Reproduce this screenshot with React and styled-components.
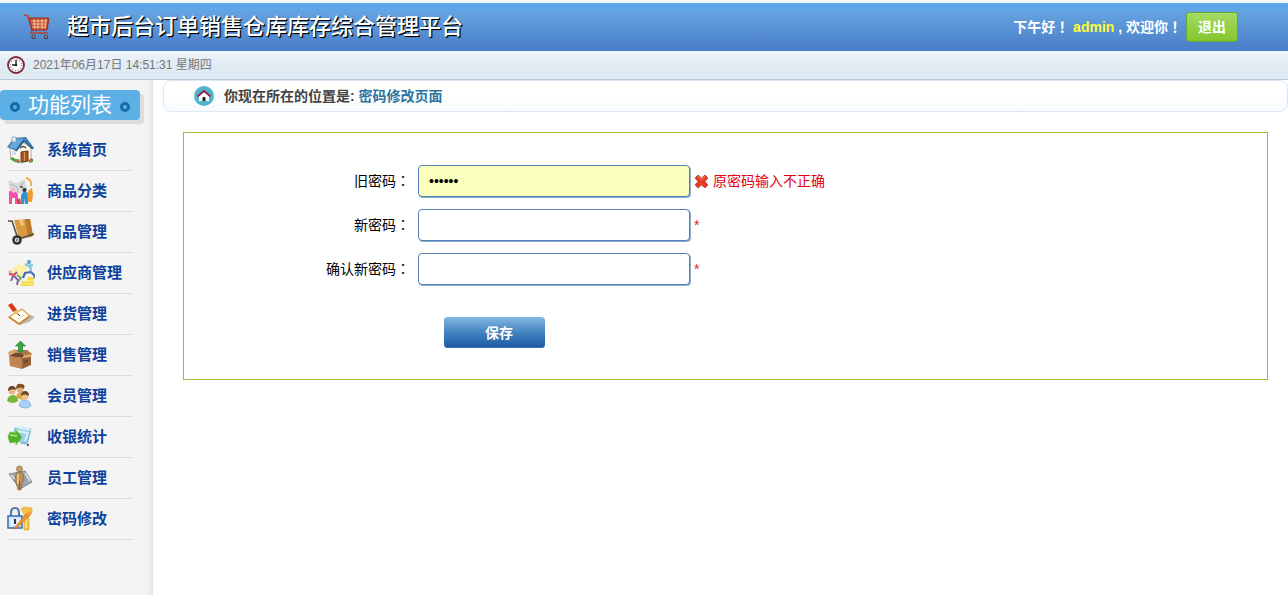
import React, { useState } from 'react';
import styled, { createGlobalStyle } from 'styled-components';

const GlobalStyle = createGlobalStyle`
    * {
        box-sizing: border-box;
    }
    body {
        margin: 0;
        background: #fff;
        color: #000;
        font-family: "Liberation Sans", "Noto Sans CJK SC", sans-serif;
        font-size: 14px;
        line-height: 20px;
    }
    svg {
        display: block;
        flex: none;
    }
`;

const Page = styled.div`
    display: flex;
    flex-direction: column;
    min-height: 100vh;
`;

const Header = styled.header`
    display: flex;
    align-items: center;
    justify-content: space-between;
    height: 51px;
    padding: 0 50px 0 23px;
    border-top: 3px solid #f3f8fc;
    background: linear-gradient(#5caaec, #64a2e0 20%, #497dc8);
`;

const Brand = styled.div`
    display: flex;
    align-items: center;
    gap: 16px;
`;

const Title = styled.h1`
    margin: 0;
    color: #fff;
    font-size: 22px;
    font-weight: 500;
    line-height: 32px;
    text-shadow: 1px 1px 0 #000, 1px 1px 1px #000;
`;

const Welcome = styled.div`
    display: flex;
    align-items: center;
    gap: 4px;
    color: #fff;
    font-weight: 700;
`;

const UserName = styled.span`
    color: #ff3;
`;

// 全角标点居中显示
const Mark = styled.span`
    font-family: "Noto Sans CJK TC", sans-serif;
    line-height: 1;
`;

const Logout = styled.button`
    width: 52px;
    height: 30px;
    padding: 0;
    border: 1px solid #64a83a;
    border-radius: 3px;
    background: linear-gradient(#a5dc64, #84c52c);
    color: #fff;
    font: inherit;
    cursor: pointer;
`;

const TimeBar = styled.div`
    display: flex;
    align-items: center;
    gap: 8px;
    height: 29px;
    padding-left: 7px;
    border-bottom: 1px solid #b9cad8;
    background: linear-gradient(#f1f5fb, #dfeaf3 50%, #e0ebf4);
    color: #777;
    font-size: 12px;
`;

const Body = styled.div`
    display: flex;
    flex: 1;
`;

const Sidebar = styled.aside`
    flex: none;
    width: 153px;
    padding-top: 10px;
    background: linear-gradient(to right, #f4f4f4 144px, #f0f0f0 149px, #e4e4e4);
`;

const SideTitle = styled.h2`
    display: flex;
    align-items: center;
    justify-content: space-between;
    width: 140px;
    height: 30px;
    margin: 0 0 10px;
    padding: 0 10px;
    border-radius: 4px;
    background: #5cb0e6;
    box-shadow: 4px 4px 0 #dcdcdc;
    color: #fff;
    font-size: 21px;
    font-weight: 400;
    line-height: 30px;
`;

const Dot = styled.i`
    width: 10px;
    height: 10px;
    margin-top: 4px;
    border: 3px solid #176ca8;
    border-radius: 50%;
`;

const Menu = styled.ul`
    margin: 0 20px 0 7px;
    padding: 0;
    list-style: none;
`;

const MenuItem = styled.li`
    border-bottom: 1px solid #ddd;
`;

const MenuLink = styled.a`
    display: flex;
    align-items: center;
    gap: 12px;
    height: 40px;
    color: #0c429c;
    font-size: 15px;
    font-weight: 700;
    line-height: 20px;
    text-decoration: none;
`;

const Main = styled.main`
    flex: 1;
    padding-left: 10px;
`;

const Location = styled.div`
    display: flex;
    align-items: center;
    gap: 10px;
    height: 32px;
    padding-left: 30px;
    border: 1px solid #dce7f3;
    border-radius: 8px;
    background: linear-gradient(#fff 40%, #f7fafd);
    color: #444;
    font-weight: 700;
    span {
        color: #2a749f;
    }
`;

const Form = styled.form`
    display: flex;
    flex-direction: column;
    gap: 12px;
    margin: 20px;
    padding: 32px 0 31px;
    border: 1px solid #a5bd36;
`;

const Field = styled.div`
    display: flex;
    align-items: center;
    label {
        width: 226px;
        margin-right: 8px;
        text-align: right;
    }
`;

const Input = styled.input`
    width: 272px;
    height: 32px;
    margin-right: 4px;
    padding: 0 10px;
    border: 1px solid #5480b4;
    border-radius: 4px;
    outline: none;
    background: ${(props) => (props.$filled ? '#faffbd' : '#fff')};
    box-shadow: 1px 1px 0 #8bafd2;
    font: inherit;
`;

const Required = styled.span`
    color: #e02030;
    font-size: 14px;
`;

const ErrorText = styled.span`
    display: flex;
    align-items: center;
    gap: 4px;
    color: #e60012;
`;

const Save = styled.button`
    width: 101px;
    height: 31px;
    margin: 20px 0 0 260px;
    padding: 0 0 0 9px;
    border: 0;
    border-radius: 4px;
    background: linear-gradient(#82b9e2, #4383bf 50%, #1b58a4);
    box-shadow: inset 0 -1px 0 #3c73b1;
    color: #fff;
    font: inherit;
    font-weight: 700;
    cursor: pointer;
`;

const CartIcon = () => (
    <svg width="28" height="28" viewBox="0 0 28 28">
        <path d="M6 5h20l-2 12H9z" fill="#c4472c" />
        <path d="M8 8h16M8.500 11h15M9 14h14M11 6l1 10M15 6v10M19 6v10M23 6l-1 10" stroke="#f6c9a6" strokeWidth="1" fill="none" />
        <path d="M1 2l4 1 4 14-1 3h17" stroke="#b3452f" strokeWidth="1.600" fill="none" />
        <path d="M6 5h20l-2 12H9z" fill="none" stroke="#9c3322" />
        <circle cx="10.500" cy="24" r="2.200" fill="#4a4350" />
        <circle cx="23" cy="24" r="2.200" fill="#4a4350" />
        <circle cx="10.500" cy="23.700" r=".8" fill="#ddd" />
        <circle cx="23" cy="23.700" r=".8" fill="#ddd" />
    </svg>
);

const ClockIcon = () => (
    <svg width="18" height="18" viewBox="0 0 18 18">
        <circle cx="9" cy="9" r="8" fill="#fff" stroke="#7e2730" strokeWidth="1.800" />
        <circle cx="9" cy="9" r="5.700" fill="none" stroke="#555" strokeWidth="1.200" strokeDasharray=".8 2.180" />
        <path d="M9 4v5H5" fill="none" stroke="#222" strokeWidth="1.400" />
        <circle cx="9" cy="9" r="1.200" fill="#222" />
    </svg>
);

const HomeIcon = () => (
    <svg width="20" height="20" viewBox="0 0 20 20">
        <circle cx="10" cy="10" r="10" fill="#4fb5ca" />
        <path d="M5 9.500L10 6l5 3.500V15H5z" fill="#fff" />
        <path d="M3.500 10.500L10 5l6.500 5.500" fill="none" stroke="#9c1d52" strokeWidth="1.800" />
        <path d="M8.500 15v-3.500q1.500-1.500 3 0V15z" fill="#222" />
    </svg>
);

const CrossIcon = () => (
    <svg width="15" height="16" viewBox="0 0 15 16">
        <path d="M4 2l3.500 3L11 2l3 3-3 3.500 3 3.500-3 3-3.500-3L4 15l-3-3 3-3.500L1 5z" fill="#e63a22" stroke="#b8574c" strokeLinejoin="round" />
        <path d="M4 3.500l3.500 3 3.500-3" fill="none" stroke="#f58e70" />
    </svg>
);

const ICONS = {
    house: (
        <>
            <path d="M3 12l11-7 10 7v12l-9 3-11-4z" fill="#fbf8ee" stroke="#87796a" strokeWidth=".6" />
            <path d="M0 11L7 2l12-1 8 11-2 1-8-8-8 10z" fill="#3f83b8" />
            <path d="M2 11L8 3l8 0-7 10z" fill="#69a8d4" />
            <path d="M5 1h4v5H5z" fill="#e4eef6" stroke="#5b8fba" strokeWidth=".6" />
            <path d="M9 15l8-10 9 8" fill="none" stroke="#245a87" strokeWidth="1.300" />
            <path d="M14 16l7-1v10l-7 1z" fill="#aa5426" stroke="#6f3415" />
            <path d="M17.500 16v9" stroke="#df9853" />
            <path d="M13 12q3-3 6 0" fill="none" stroke="#444" strokeWidth="1.300" />
            <path d="M5 15h4v4H5z" fill="#cde0ec" />
            <path d="M3 23q2-3 4-1t5 1l1 4q-5 0-10-4zM22 24q2-3 4-1v3l-4 1z" fill="#519c3c" />
            <path d="M8 24h3v2H8zM23 23h2v2h-2z" fill="#e75539" />
        </>
    ),
    category: (
        <>
            <path d="M2 4l8 3 7-4 3 10-8 3-9-4z" fill="#d9dbdd" stroke="#c4c6c8" strokeWidth=".6" />
            <path d="M4 7l6 3 1 5M12 9l5-3" fill="none" stroke="#b0b4b8" />
            <path d="M13 10h3" stroke="#444" strokeWidth="1.500" />
            <path d="M19 1q6 1 5 8" fill="none" stroke="#edab55" strokeWidth="1.800" />
            <path d="M2 27v-9q-1-5 3-4 0 3 3 1 3 0 3 4v8H8v-6H5v6z" fill="#ef51aa" />
            <circle cx="6" cy="13" r="2" fill="#f4b6c4" />
            <path d="M14 27v-9l3-4 4 2v11h-3v-6l-1 6z" fill="#3393d0" />
            <circle cx="17.500" cy="13" r="2" fill="#333" />
            <path d="M21 25l-1-8 2-4 3-2 1 6-1 8z" fill="#ee9c2c" />
            <path d="M10 23l3-2 1 6h-3z" fill="#dd3c34" />
        </>
    ),
    trolley: (
        <>
            <path d="M7 2l16-1 3 17-14 4z" fill="#d99c43" />
            <path d="M18 1l5 0 3 17-5 1.500z" fill="#b97b2b" />
            <path d="M12 2l4 0 1 5-3 1z" fill="#efc777" />
            <path d="M1 3h4l6 18 16-5" fill="none" stroke="#55504b" strokeWidth="1.600" />
            <circle cx="10" cy="22" r="4.800" fill="#313131" />
            <circle cx="10" cy="22" r="2.300" fill="#ddd" />
            <circle cx="10" cy="22" r="1" fill="#555" />
        </>
    ),
    supplier: (
        <>
            <path d="M5 10l6-5 10 2-2 9-6 3-7-4z" fill="#ffefac" />
            <path d="M13 27l2-5h5l1-4h6v9z" fill="#f3dd47" />
            <path d="M15 25h11M18 22h9" stroke="#fff08d" />
            <circle cx="3" cy="13" r="1.700" fill="#e8b5a1" />
            <path d="M2 15l5 1 3-3M6 17l-2 5M7 17l4 4-1 5" fill="none" stroke="#8b5aac" strokeWidth="2" />
            <path d="M3 15l5 1" stroke="#e6514a" strokeWidth="2" />
            <circle cx="22" cy="3" r="2.200" fill="#6ba7ca" />
            <path d="M18 5l4 2 4-1M23 7l1 6" fill="none" stroke="#83c5e0" strokeWidth="2.500" />
            <path d="M24 13l-6 1-2 5M24 13l3 3 1 3" fill="none" stroke="#4969b4" strokeWidth="2.200" />
            <path d="M10 16l4 3-3 4" fill="none" stroke="#62a16b" strokeWidth="1.600" />
        </>
    ),
    purchase: (
        <>
            <path d="M11 23l13-8 4 2-6 5-9 3z" fill="#b8b8b8" />
            <path d="M2 17l13-8 8 7-11 8z" fill="#fffdf3" stroke="#e0a04a" strokeWidth="1.200" />
            <path d="M2 17l10 7 11-8" fill="none" stroke="#c98630" strokeWidth="1.600" />
            <path d="M12 18l5-3" stroke="#e4d4aa" />
            <path d="M1 5l4-2 5 7-4 2z" fill="#d93818" />
            <path d="M6 12l4-2 3 6z" fill="#eab96a" />
            <path d="M11 14l2 2" stroke="#333" />
        </>
    ),
    sales: (
        <>
            <path d="M2 15l13 2v11L3 25z" fill="#c1834f" />
            <path d="M15 17l9-4v11l-9 4z" fill="#966038" />
            <path d="M2 15l5-4 17 2-9 4z" fill="#75482a" />
            <path d="M2 15l-1-4 7-3 2 3zM15 17l2-3 8-2-1 4z" fill="#dba772" />
            <path d="M7 9l13 0 5 4-8 1z" fill="#ad7445" />
            <path d="M13.500 0l5 5h-3v6h-4V5h-3z" fill="#3ea344" stroke="#2a7f35" strokeWidth=".7" />
            <path d="M17 20l4-2v3l-4 2z" fill="#6b452f" />
        </>
    ),
    members: (
        <>
            <path d="M0 19q1-6 6-6t5 6q-5 4-11 0z" fill="#75b83c" />
            <circle cx="5" cy="9" r="3.500" fill="#e5b98a" />
            <path d="M1 9q0-5 4-5t4 4q-4-2-8 1z" fill="#654527" />
            <path d="M9 15q1-5 5-5t6 6q-5 4-11-1z" fill="#dda54b" />
            <circle cx="13" cy="7" r="3.500" fill="#e3b07d" />
            <path d="M9 7q0-6 5-5 5 0 3 5-3-3-8 0z" fill="#80531f" />
            <path d="M12 24q1-6 6-6t6 6q-6 4-12 0z" fill="#a8cff3" stroke="#6b9dd0" strokeWidth=".6" />
            <circle cx="18" cy="14" r="3.700" fill="#eebf91" />
            <path d="M14 14q0-5 4-5t4 5q-4-3-8 0z" fill="#6e4b2d" />
        </>
    ),
    cashier: (
        <>
            <path d="M8 5l16 1-4 15-14-5z" fill="#9ed1e9" stroke="#6faecb" />
            <path d="M8 5l5-2 12 3-2 2z" fill="#d5edf6" />
            <path d="M10 8l11 2-3 8" fill="none" stroke="#d9f1fa" strokeWidth="2" />
            <path d="M1 14l2-5 6 1V7l6 7-6 8v-3l-6 1z" fill="#4fae2b" stroke="#78ca4c" />
            <path d="M3 12l7 1" stroke="#a0df78" strokeWidth="2" />
            <path d="M13 20l6 1" stroke="#86b6cf" />
            <path d="M20 22h2" stroke="#222" strokeWidth="1.500" />
        </>
    ),
    staff: (
        <>
            <path d="M2 10l16-3 7 11-12 7z" fill="#9da4aa" stroke="#848b91" />
            <path d="M4 11l9 9M18 9l5 8" stroke="#dce1e5" strokeWidth="1.600" />
            <circle cx="12.500" cy="5" r="3" fill="#c6a065" stroke="#816137" strokeWidth=".6" />
            <path d="M9 10q4-4 7 0l1 7-2 1-1 8h-3L9 18l-1-1z" fill="#bd925a" stroke="#80613b" strokeWidth=".6" />
            <path d="M11 10v10" stroke="#efd29d" strokeWidth="1.500" />
            <path d="M12.500 17v8" stroke="#745433" />
        </>
    ),
    password: (
        <>
            <path d="M14 4l3-2 8 1v5l-3 3v14h-5V9z" fill="#f6c445" stroke="#da9d2b" strokeWidth=".6" />
            <path d="M19 8v15" stroke="#ffe48b" strokeWidth="1.500" />
            <path d="M4 12V8q0-5 4-5t4 5v4" fill="none" stroke="#567da7" strokeWidth="2.200" />
            <path d="M1 11h14v12H1z" fill="#d3e7fa" stroke="#346dae" strokeWidth="1.500" />
            <path d="M4 14h8v6H4z" fill="#f1f7fd" />
            <path d="M8 14v5" stroke="#243f65" strokeWidth="2.200" />
            <path d="M8 22l12-14 3 2-13 13-3 1z" fill="#eb9c32" stroke="#b85b2e" strokeWidth=".6" />
            <path d="M20 8l2-2 3 2-2 3z" fill="#f8a04b" />
        </>
    ),
};

const menus = [
    { name: '系统首页', icon: 'house' },
    { name: '商品分类', icon: 'category' },
    { name: '商品管理', icon: 'trolley' },
    { name: '供应商管理', icon: 'supplier' },
    { name: '进货管理', icon: 'purchase' },
    { name: '销售管理', icon: 'sales' },
    { name: '会员管理', icon: 'members' },
    { name: '收银统计', icon: 'cashier' },
    { name: '员工管理', icon: 'staff' },
    { name: '密码修改', icon: 'password' },
];

// 左侧功能列表
const SideMenu = () => (
    <Sidebar>
        <SideTitle>
            <Dot />
            功能列表
            <Dot />
        </SideTitle>
        <nav>
            <Menu>
                {menus.map((el) => (
                    <MenuItem key={el.name}>
                        <MenuLink href="#">
                            <svg width="28" height="28" viewBox="0 0 28 28">
                                {ICONS[el.icon]}
                            </svg>
                            {el.name}
                        </MenuLink>
                    </MenuItem>
                ))}
            </Menu>
        </nav>
    </Sidebar>
);

// 密码修改表单
const PasswordForm = () => {
    const [oldPassword, setOldPassword] = useState('123456');

    return (
        <Form onSubmit={(e) => e.preventDefault()}>
            <Field>
                <label htmlFor="oldPassword">
                    旧密码<Mark>：</Mark>
                </label>
                <Input
                    id="oldPassword"
                    type="password"
                    $filled={oldPassword !== ''}
                    value={oldPassword}
                    onChange={(e) => setOldPassword(e.target.value)}
                />
                <ErrorText>
                    <CrossIcon />
                    原密码输入不正确
                </ErrorText>
            </Field>
            <Field>
                <label htmlFor="newPassword">
                    新密码<Mark>：</Mark>
                </label>
                <Input id="newPassword" type="password" />
                <Required>*</Required>
            </Field>
            <Field>
                <label htmlFor="reNewPassword">
                    确认新密码<Mark>：</Mark>
                </label>
                <Input id="reNewPassword" type="password" />
                <Required>*</Required>
            </Field>
            <Save type="submit">保存</Save>
        </Form>
    );
};

const App = () => (
    <Page>
        <GlobalStyle />
        <Header>
            <Brand>
                <CartIcon />
                <Title>超市后台订单销售仓库库存综合管理平台</Title>
            </Brand>
            <Welcome>
                <div>
                    下午好<Mark>！</Mark> <UserName>admin</UserName> , 欢迎你<Mark>！</Mark>
                </div>
                <Logout type="button">退出</Logout>
            </Welcome>
        </Header>
        <TimeBar>
            <ClockIcon />
            2021年06月17日 14:51:31 星期四
        </TimeBar>
        <Body>
            <SideMenu />
            <Main>
                <Location>
                    <HomeIcon />
                    <div>
                        你现在所在的位置是: <span>密码修改页面</span>
                    </div>
                </Location>
                <PasswordForm />
            </Main>
        </Body>
    </Page>
);

export default App;
